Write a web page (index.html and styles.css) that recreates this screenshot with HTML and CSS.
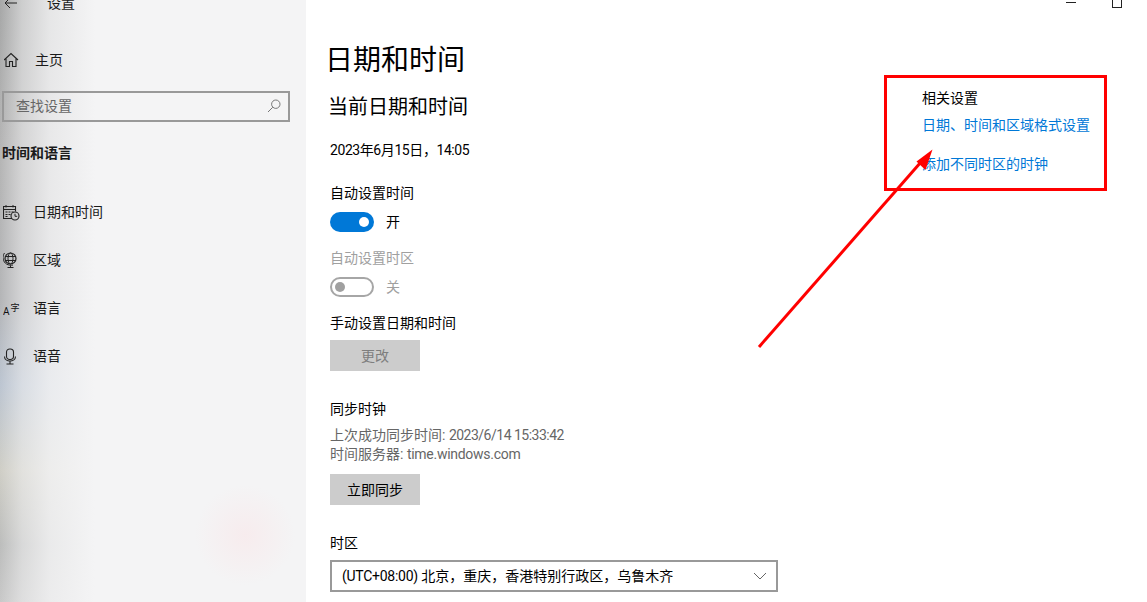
FILE: index.html
```html
<!DOCTYPE html>
<html lang="zh-CN">
<head>
  <meta charset="UTF-8">
  <title>设置</title>
  <link rel="stylesheet" href="styles.css">
</head>
<body>
<div class="window">
  <aside class="sidebar">
    <div class="titlebar">
      <svg class="back-icon" width="14" height="12" viewBox="0 0 14 12"><path d="M6 1 1 6l5 5M1 6h12" fill="none" stroke="#222" stroke-width="1"/></svg>
      <span>设置</span>
    </div>
    <div class="home-row">
      <svg width="16" height="16" viewBox="0 0 16 16"><path d="M0 8 7 1.500 14 8M2 6.500V14.500h3.500V9.500h3v5H12V6.500" fill="none" stroke="#222" stroke-width="1.100"/></svg>
      <span>主页</span>
    </div>
    <div class="search">
      <span>查找设置</span>
      <svg width="14" height="14" viewBox="0 0 14 14"><circle cx="8.800" cy="5.200" r="4.200" fill="none" stroke="#777"/><path d="M5.800 8.200 1 13" stroke="#777"/></svg>
    </div>
    <div class="section-title">时间和语言</div>
    <nav class="nav">
      <div class="nav-item">
        <svg width="17" height="17" viewBox="0 0 17 17"><path d="M9 14.500H.5V2.500h12v5" fill="none" stroke="#222" stroke-width="1.100"/><path d="M.5 2.500h12v3H.5zM3 1v2.500M10 1v2.500M2.500 8h2M5.500 8h2M8.500 8h2M2.500 10.500h2M5.500 10.500h2M2.500 12.500h2" fill="none" stroke="#222"/><circle cx="12" cy="12" r="4" fill="none" stroke="#222" stroke-width="1.100"/><path d="M12 9.800v2.500h2.200" fill="none" stroke="#222"/></svg>
        <span>日期和时间</span>
      </div>
      <div class="nav-item">
        <svg width="17" height="17" viewBox="0 0 17 17"><circle cx="7.500" cy="6.500" r="5.500" fill="none" stroke="#222" stroke-width="1.200"/><ellipse cx="7.500" cy="6.500" rx="2.500" ry="5.500" fill="none" stroke="#222"/><path d="M2 4.500h11M2 8.500h11M1.500 1C-1.200 4.500 0 10 3.500 12c2 1.200 4.500 1.500 6.500 1M7.500 13.500v2M4.500 15.500h6" fill="none" stroke="#222"/></svg>
        <span>区域</span>
      </div>
      <div class="nav-item">
        <svg width="17" height="17" viewBox="0 0 17 17"><text x="0" y="15" font-size="10" fill="#111">A</text><text x="7.500" y="11" font-size="9" fill="#111">字</text></svg>
        <span>语言</span>
      </div>
      <div class="nav-item">
        <svg width="17" height="17" viewBox="0 0 17 17"><rect x="3.500" y="1" width="7" height="10.500" rx="3.200" fill="none" stroke="#222" stroke-width="1.100"/><path d="M1.500 8.500c0 6 11 6 11 0M7 13.500v2.500M3.500 16h7" fill="none" stroke="#222" stroke-width="1.100"/></svg>
        <span>语音</span>
      </div>
    </nav>
  </aside>

  <main class="content">
    <section class="settings">
      <h1>日期和时间</h1>
      <h2>当前日期和时间</h2>
      <p class="current-date">2023年6月15日，14:05</p>

      <p class="label gap-l">自动设置时间</p>
      <div class="toggle-row">
        <span class="toggle toggle-on"></span>
        <span>开</span>
      </div>

      <p class="label gap-m muted">自动设置时区</p>
      <div class="toggle-row muted">
        <span class="toggle toggle-off"></span>
        <span>关</span>
      </div>

      <p class="label gap-m">手动设置日期和时间</p>
      <button class="btn btn-disabled">更改</button>

      <p class="label gap-xl">同步时钟</p>
      <p class="sync-info first">上次成功同步时间: <span class="tight">2023/6/14 15:33:42</span></p>
      <p class="sync-info">时间服务器: <span class="tight-s">time.windows.com</span></p>
      <button class="btn btn-sync">立即同步</button>

      <p class="label gap-xl">时区</p>
      <div class="select">
        <span><span class="tight-s">(UTC+08:00)</span> 北京，重庆，香港特别行政区，乌鲁木齐</span>
        <svg width="14" height="8" viewBox="0 0 14 8"><path d="M1 1l6 6 6-6" fill="none" stroke="#666"/></svg>
      </div>
    </section>

    <section class="related">
      <div class="win-buttons">
        <span class="win-min"></span>
        <span class="win-max"></span>
      </div>
      <h3>相关设置</h3>
      <a class="link first-link">日期、时间和区域格式设置</a>
      <a class="link second-link">添加不同时区的时钟</a>
    </section>
  </main>
</div>

<!-- red marks drawn on top of the screenshot -->
<div class="mark-box"></div>
<svg class="mark-arrow" width="1147" height="602" viewBox="0 0 1147 602">
  <path d="M759 347 921 162" stroke="#f00" stroke-width="3" fill="none"/>
  <path d="M932.500 149.500 916.500 161.500 925.500 170z" fill="#f00"/>
</svg>
</body>
</html>
```

FILE: styles.css
```css
* {
  box-sizing: border-box;
}
html, body {
  margin: 0;
  height: 602px;
  overflow: hidden;
  background: #fff;
}
body {
  font-family: Roboto, "Noto Sans CJK SC", sans-serif;
  font-size: 14px;
  line-height: 20px;
  color: #000;
}
p, h1, h2, h3 {
  margin: 0;
  font-weight: 400;
}
.window {
  display: flex;
  height: 602px;
}

/* sidebar */
.sidebar {
  width: 306px;
  flex: none;
  color: #1a1a1a;
  background:
    radial-gradient(circle at 245px 535px, rgba(248,232,234,.7) 0, rgba(248,232,234,0) 50px),
    linear-gradient(to right, rgba(244,244,245,0) 0, rgba(244,244,245,.5) 22px, rgba(244,244,245,.82) 50px, rgba(244,244,245,1) 95px),
    linear-gradient(to bottom, #a6a7a7 0, #b5b5b5 150px, #b4b5b7 300px, #bcc5d1 385px, #cfcec6 470px, #bcbdbc 545px, #c8c8c8 602px);
}
.titlebar {
  display: flex;
  align-items: center;
  height: 20px;
  margin-top: -7px;
  padding-left: 4px;
}
.titlebar span {
  margin-left: 29px;
}
.back-icon {
  flex: none;
}
.home-row {
  display: flex;
  align-items: center;
  gap: 15px;
  height: 40px;
  margin-top: 27px;
  padding-left: 4px;
}
.search {
  display: flex;
  align-items: center;
  justify-content: space-between;
  width: 288px;
  height: 31px;
  margin: 11px 0 0 2px;
  padding: 0 7px 2px 12px;
  border: 2px solid #999;
  color: #666;
}
.section-title {
  margin-top: 21px;
  padding-left: 2px;
  font-weight: 700;
}
.nav {
  margin-top: 25px;
}
.nav-item {
  display: flex;
  align-items: center;
  gap: 13px;
  height: 48px;
  padding-left: 3px;
}

/* main column */
.content {
  flex: 1;
  display: flex;
  justify-content: space-between;
  padding: 41px 0 0 21px;
}
.settings {
  width: 460px;
}
h1 {
  font-size: 28px;
  line-height: 40px;
  margin-left: -2px;
}
h2 {
  font-size: 20px;
  line-height: 28px;
  margin: 12px 0 0 1px;
}
.current-date {
  margin: 19px 0 0 3px;
  letter-spacing: -.42px;
}
.tight {
  letter-spacing: -.5px;
}
.tight-s {
  letter-spacing: -.27px;
}
.label {
  margin-left: 3px;
}
.gap-l {
  margin-top: 23px;
}
.gap-m {
  margin-top: 16px;
}
.gap-xl {
  margin-top: 28px;
}
.muted {
  color: #a0a0a0;
}
.toggle-row {
  display: flex;
  align-items: center;
  gap: 12px;
  height: 20px;
  margin: 9px 0 0 3px;
}
.toggle {
  position: relative;
  width: 44px;
  height: 20px;
  border-radius: 10px;
}
.toggle::after {
  content: "";
  position: absolute;
  top: 5px;
  width: 10px;
  height: 10px;
  border-radius: 50%;
}
.toggle-on {
  background: #0078d7;
}
.toggle-on::after {
  right: 5px;
  background: #fff;
}
.toggle-off {
  border: 2px solid #a6a6a6;
}
.toggle-off::after {
  top: 3px;
  left: 3px;
  background: #a0a0a0;
}
.btn {
  display: block;
  width: 90px;
  height: 31px;
  margin: 7px 0 0 3px;
  padding: 0;
  border: 0;
  background: #ccc;
  font: inherit;
  color: #000;
}
.btn-disabled {
  color: #7e7e7e;
}
.btn-sync {
  margin-top: 10px;
}
.sync-info {
  margin-left: 3px;
  line-height: 19px;
  color: #666;
}
.sync-info.first {
  margin-top: 7px;
}
.select {
  display: flex;
  align-items: center;
  justify-content: space-between;
  width: 448px;
  height: 32px;
  margin: 7px 0 0 3px;
  padding: 0 9px 0 10px;
  border: 2px solid #999;
}

/* right column */
.related {
  width: 225px;
  margin-top: -41px;
}
.win-buttons {
  display: flex;
  align-items: flex-start;
  gap: 36px;
  height: 88px;
  padding-left: 144px;
}
.win-min {
  width: 10px;
  height: 1px;
  margin-top: 2px;
  background: #222;
}
.win-max {
  width: 10px;
  height: 8px;
  border: 1px solid #222;
  border-top: 0;
}
h3 {
  font-size: 14px;
  line-height: 20px;
}
.link {
  display: block;
  color: #0078d7;
}
.first-link {
  margin-top: 7px;
}
.second-link {
  margin-top: 19px;
}

/* annotations */
.mark-box {
  position: absolute;
  left: 884px;
  top: 75px;
  width: 223px;
  height: 116px;
  border: 3px solid #f00;
}
.mark-arrow {
  position: absolute;
  left: 0;
  top: 0;
  pointer-events: none;
}
```
